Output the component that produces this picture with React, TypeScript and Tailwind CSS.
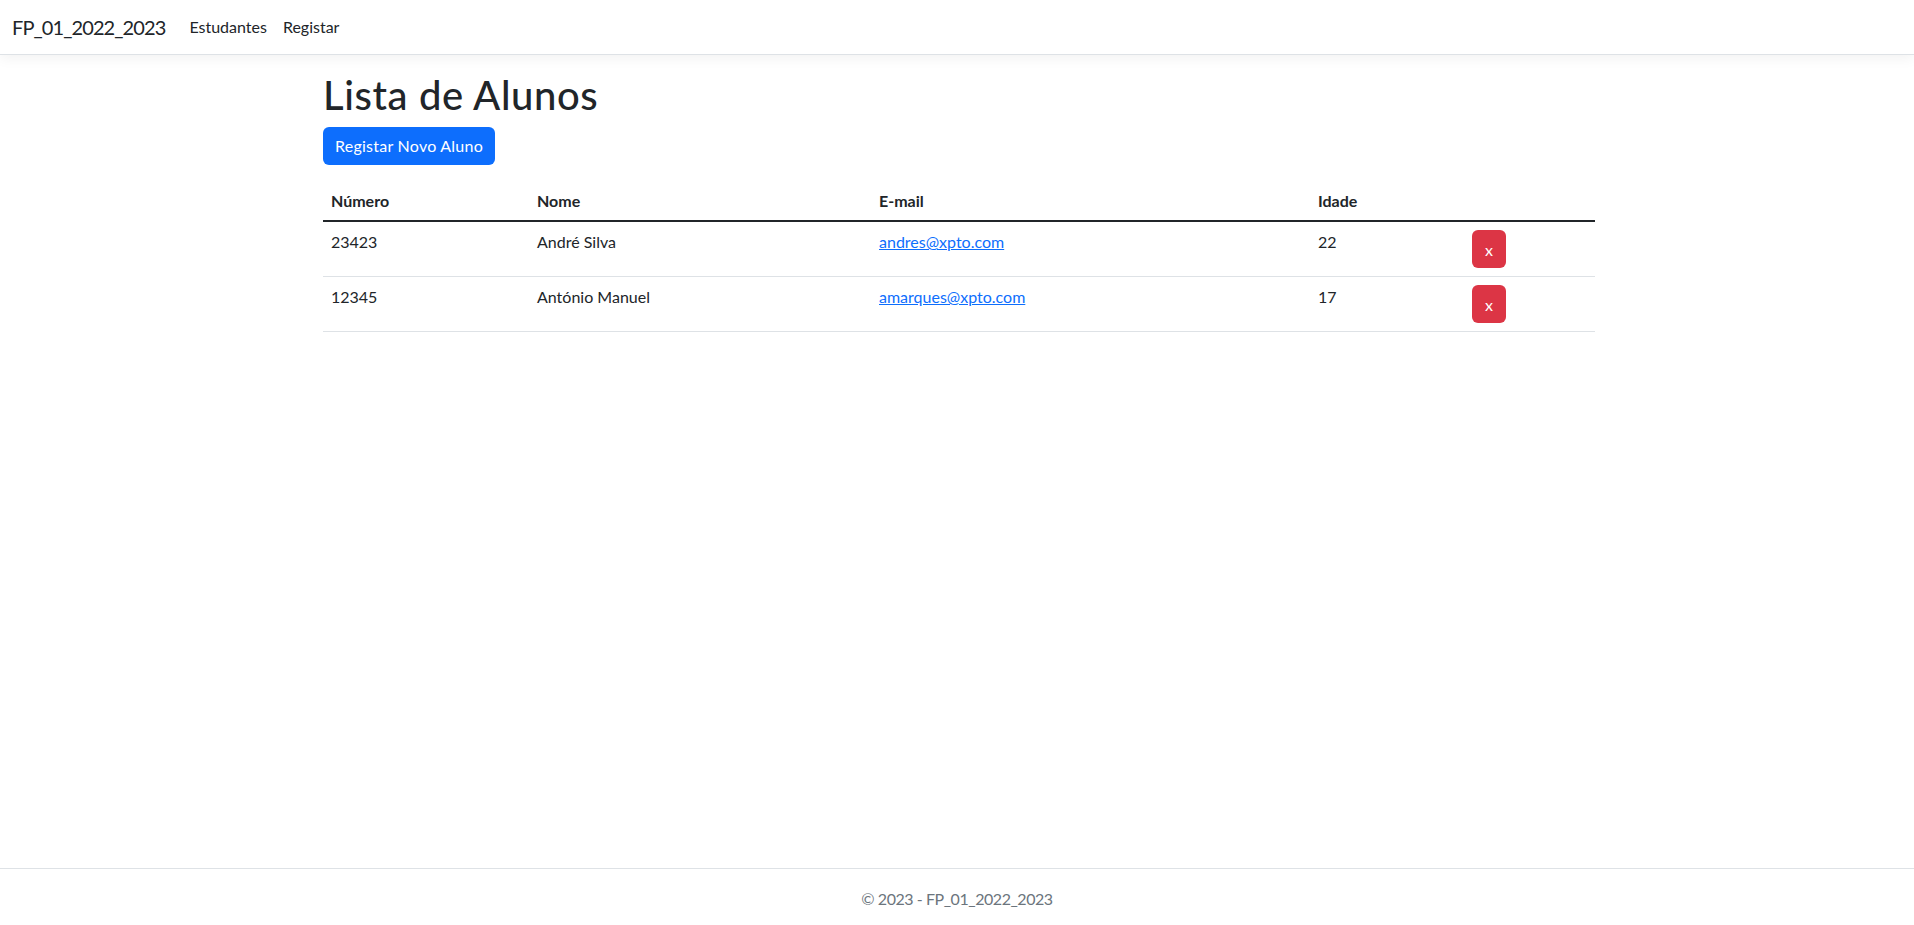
import React from "react";

const students = [
  { num: "23423", nome: "André Silva", email: "andres@xpto.com", idade: "22" },
  { num: "12345", nome: "António Manuel", email: "amarques@xpto.com", idade: "17" },
];

export default function App() {
  return (
    <div
      className="h-[925px] flex flex-col bg-white text-[#212529] text-[16px] overflow-hidden"
      style={{ fontFamily: "Lato, 'Noto Sans', sans-serif" }}
    >
      <nav className="h-[55px] shrink-0 border-b border-[#dee2e6] shadow-[0_4px_12px_rgba(0,0,0,0.05)] flex items-center px-3">
        <span className="text-[20px] tracking-[-0.9px] mr-4 text-[#212529]">FP_01_2022_2023</span>
        <a className="px-2 text-[#212529]">Estudantes</a>
        <a className="px-2 text-[#212529]">Registar</a>
      </nav>
      <main className="flex-1 w-[1272px] ml-[calc(50%-634px)] pt-4">
        <h1 className="text-[40px] leading-[1.2] font-medium tracking-[0.6px] mb-2">Lista de Alunos</h1>
        <div className="mb-4">
          <button className="h-[38px] inline-flex items-center px-3 rounded-[6px] bg-[#0d6efd] text-white text-[16px] tracking-[0.25px]">
            Registar Novo Aluno
          </button>
        </div>
        <table className="w-full border-collapse">
          <thead>
            <tr>
              <th className="w-[206px] text-left font-bold px-2 pt-2 pb-[7px] leading-6 border-b-2 border-[#212529]">Número</th>
              <th className="w-[342px] text-left font-bold px-2 pt-2 pb-[7px] leading-6 border-b-2 border-[#212529]">Nome</th>
              <th className="w-[439px] text-left font-bold px-2 pt-2 pb-[7px] leading-6 border-b-2 border-[#212529]">E-mail</th>
              <th className="w-[154px] text-left font-bold px-2 pt-2 pb-[7px] leading-6 border-b-2 border-[#212529]">Idade</th>
              <th className="text-left font-bold px-2 pt-2 pb-[7px] leading-6 border-b-2 border-[#212529]"></th>
            </tr>
          </thead>
          <tbody>
            {students.map((s) => (
              <tr key={s.num}>
                <td className="p-2 leading-6 align-top border-b border-[#dee2e6]">{s.num}</td>
                <td className="p-2 leading-6 align-top border-b border-[#dee2e6]">{s.nome}</td>
                <td className="p-2 leading-6 align-top border-b border-[#dee2e6]">
                  <a className="text-[#0d6efd] underline">{s.email}</a>
                </td>
                <td className="p-2 leading-6 align-top border-b border-[#dee2e6]">{s.idade}</td>
                <td className="p-2 leading-6 align-top border-b border-[#dee2e6]">
                  <button className="h-[38px] w-[34px] inline-flex items-center justify-center pt-0.5 rounded-[6px] bg-[#dc3545] text-white text-[16px]">
                    x
                  </button>
                </td>
              </tr>
            ))}
          </tbody>
        </table>
      </main>
      <footer className="h-[57px] shrink-0 border-t border-[#dee2e6] text-center text-[#6c757d] leading-[60px] tracking-[-0.45px] whitespace-nowrap">
        © 2023 - FP_01_2022_2023
      </footer>
    </div>
  );
}
